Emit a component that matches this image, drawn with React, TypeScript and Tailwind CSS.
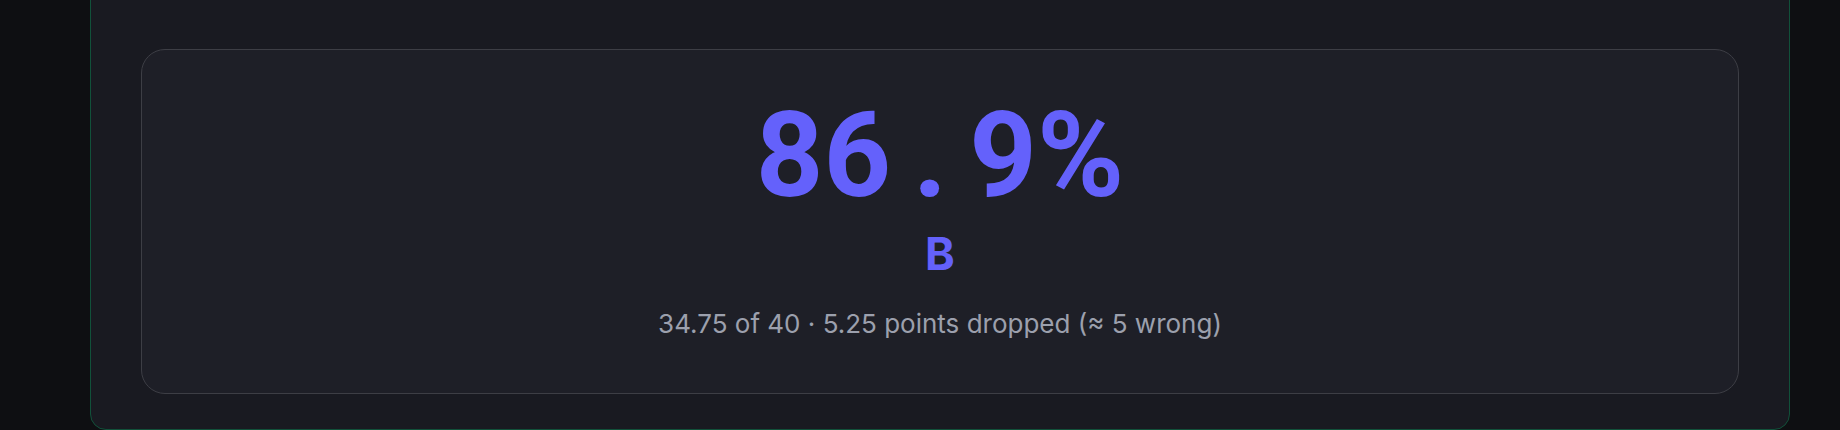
import React from 'react'

const App = () => {
  return (
    <div
      className="h-[430px] w-full overflow-hidden bg-[#0e0f12] pl-[90px] pr-[50px]"
      style={{ fontFamily: 'Inter, "Noto Sans", sans-serif' }}
    >
      <div className="-mt-[20px] rounded-b-2xl border border-[#11513a] bg-[#191a21] px-[50px] pt-[68px] pb-[35px]">
        <div className="flex flex-col items-center rounded-3xl border border-[#3d3e45] bg-[#1e1f27] pt-[47px] pb-[56px]">
          {/* score */}
          <div className="flex items-baseline font-['Roboto',sans-serif] text-[118px] font-bold leading-none text-[#6461fb]">
            <span>86</span>
            <span className="mx-[22px]">.</span>
            <span>9%</span>
          </div>
          <div className="mt-[16px] text-[45px] font-bold leading-none text-[#6461fb]">B</div>
          <div className="mt-[35px] text-[26px] leading-none text-[#9ca0ad]">
            34.75 of 40 · 5.25 points dropped (≈ 5 wrong)
          </div>
        </div>
      </div>
    </div>
  )
}

export default App
